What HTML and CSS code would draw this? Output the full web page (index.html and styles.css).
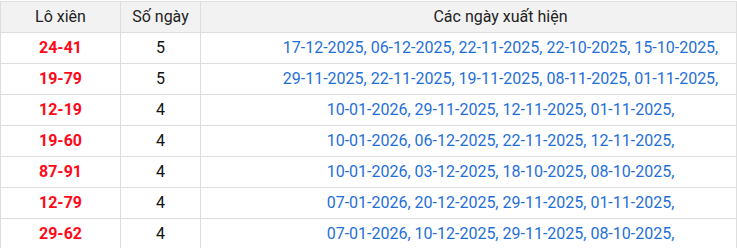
FILE: index.html
```html
<!DOCTYPE html>
<html lang="vi">
<head>
<meta charset="utf-8">
<link rel="stylesheet" href="styles.css">
</head>
<body>
<table class="lx-table">
  <colgroup>
    <col class="c-pair">
    <col class="c-count">
    <col class="c-dates">
  </colgroup>
  <thead>
    <tr><th>Lô xiên</th><th>Số ngày</th><th class="dates">Các ngày xuất hiện</th></tr>
  </thead>
  <tbody>
    <tr><td class="pair">24-41</td><td>5</td><td class="dates">17-12-2025, 06-12-2025, 22-11-2025, 22-10-2025, 15-10-2025,</td></tr>
    <tr><td class="pair">19-79</td><td>5</td><td class="dates">29-11-2025, 22-11-2025, 19-11-2025, 08-11-2025, 01-11-2025,</td></tr>
    <tr><td class="pair">12-19</td><td>4</td><td class="dates">10-01-2026, 29-11-2025, 12-11-2025, 01-11-2025,</td></tr>
    <tr><td class="pair">19-60</td><td>4</td><td class="dates">10-01-2026, 06-12-2025, 22-11-2025, 12-11-2025,</td></tr>
    <tr><td class="pair">87-91</td><td>4</td><td class="dates">10-01-2026, 03-12-2025, 18-10-2025, 08-10-2025,</td></tr>
    <tr><td class="pair">12-79</td><td>4</td><td class="dates">07-01-2026, 20-12-2025, 29-11-2025, 01-11-2025,</td></tr>
    <tr><td class="pair">29-62</td><td>4</td><td class="dates">07-01-2026, 10-12-2025, 29-11-2025, 08-10-2025,</td></tr>
  </tbody>
</table>
</body>
</html>
```
FILE: styles.css
```css
html, body {
  margin: 0;
  padding: 0;
  background: #fff;
}
body {
  padding-top: 1px;
  font-family: Roboto, "Liberation Sans", Arial, sans-serif;
  font-size: 16px;
  color: #222;
}
.lx-table {
  width: 737px;
  border-collapse: collapse;
  table-layout: fixed;
}
.c-pair { width: 120px; }
.c-count { width: 80px; }
.lx-table th,
.lx-table td {
  border: 1px solid #dedede;
  padding: 5px 0;
  line-height: 20px;
  text-align: center;
  white-space: nowrap;
  overflow: hidden;
}
.lx-table th {
  background: #f2f2f2;
  font-weight: normal;
  color: #222;
}
.lx-table td {
  color: #111;
}
.lx-table td.pair {
  color: #ff0a1a;
  font-weight: bold;
}
.lx-table .dates {
  padding-left: 64px;
}
.lx-table td.dates {
  color: #1f6fd8;
}
```
